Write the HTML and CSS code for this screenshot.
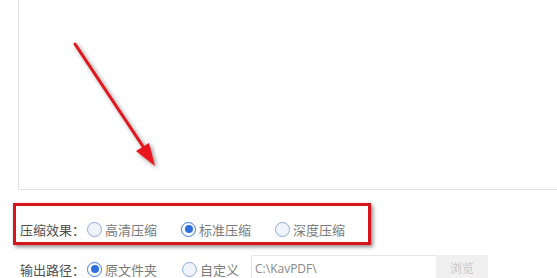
FILE: index.html
```html
<!DOCTYPE html>
<html lang="zh">
<head>
<meta charset="utf-8">
<link rel="stylesheet" href="styles.css">
</head>
<body>
<div class="page">
  <div class="panel"></div>
  <div class="options">
    <div class="row">
      <span class="label">压缩效果：</span>
      <span class="opt"><span class="radio"></span><span class="txt">高清压缩</span></span>
      <span class="opt"><span class="radio on"></span><span class="txt">标准压缩</span></span>
      <span class="opt"><span class="radio"></span><span class="txt">深度压缩</span></span>
    </div>
    <div class="row">
      <span class="label">输出路径：</span>
      <span class="opt"><span class="radio on"></span><span class="txt">原文件夹</span></span>
      <span class="opt"><span class="radio"></span><span class="txt">自定义</span></span>
      <span class="path">C:\KavPDF\</span>
      <span class="btn">浏览</span>
    </div>
  </div>
  <div class="redbox"></div>
  <svg class="arrow" width="557" height="278" viewBox="0 0 557 278">
    <defs>
      <filter id="sh" x="-20%" y="-20%" width="140%" height="140%">
        <feGaussianBlur in="SourceAlpha" stdDeviation="2"/>
        <feOffset dx="2" dy="2" result="b"/>
        <feComponentTransfer><feFuncA type="linear" slope="0.45"/></feComponentTransfer>
        <feMerge><feMergeNode/><feMergeNode in="SourceGraphic"/></feMerge>
      </filter>
    </defs>
    <g filter="url(#sh)">
      <line x1="75" y1="44" x2="146" y2="151" stroke="#e0141a" stroke-width="3" stroke-linecap="round"/>
      <polygon points="155,166 136,151 149,143" fill="#e8141a"/>
    </g>
  </svg>
</div>
</body>
</html>
```
FILE: styles.css
```css
html, body {
  margin: 0;
  padding: 0;
  background: #fff;
}
.page {
  position: relative;
  width: 557px;
  height: 278px;
  overflow: hidden;
  font-family: "Noto Sans CJK SC", "Microsoft YaHei", sans-serif;
  font-size: 13px;
}
.panel {
  margin-left: 18px;
  margin-top: -2px;
  height: 192px;
  width: 560px;
  border: 1px solid #e3e3e3;
  box-sizing: border-box;
  background: #fff;
}
.options {
  padding-left: 20px;
  padding-top: 19px;
}
.row {
  display: flex;
  align-items: center;
  height: 40px;
}
.label {
  color: #505050;
  width: 67px;
  white-space: nowrap;
}
.opt {
  display: flex;
  align-items: center;
  margin-right: 24px;
  color: #7a7a7a;
}
.radio {
  width: 15px;
  height: 15px;
  box-sizing: border-box;
  border: 1px solid #8fabdc;
  border-radius: 50%;
  background: #eef3fc;
  margin-right: 3px;
  position: relative;
}
.radio.on {
  border-color: #3a78de;
  background: #fff;
}
.radio.on::after {
  content: "";
  position: absolute;
  left: 2.5px;
  top: 2.5px;
  width: 8px;
  height: 8px;
  border-radius: 50%;
  background: #2f6fe0;
}
.row + .row .opt:nth-child(3) {
  margin-left: 1px;
}
.path {
  margin-left: -12px;
  height: 28px;
  width: 185px;
  box-sizing: border-box;
  border: 1px solid #e6e6e6;
  border-right: none;
  padding-left: 3px;
  line-height: 26px;
  color: #888;
  font-family: "Open Sans", "Noto Sans", sans-serif;
  font-size: 12px;
}
.btn {
  width: 52px;
  height: 28px;
  background: #f0f0f0;
  color: #c8c8c8;
  text-align: center;
  line-height: 26px;
  font-size: 12px;
}
.redbox {
  position: absolute;
  left: 13px;
  top: 203px;
  width: 358px;
  height: 42px;
  box-sizing: border-box;
  border: 3px solid #d7141b;
  box-shadow: 2px 2px 4px rgba(0,0,0,0.45);
}
.arrow {
  position: absolute;
  left: 0;
  top: 0;
}
```
